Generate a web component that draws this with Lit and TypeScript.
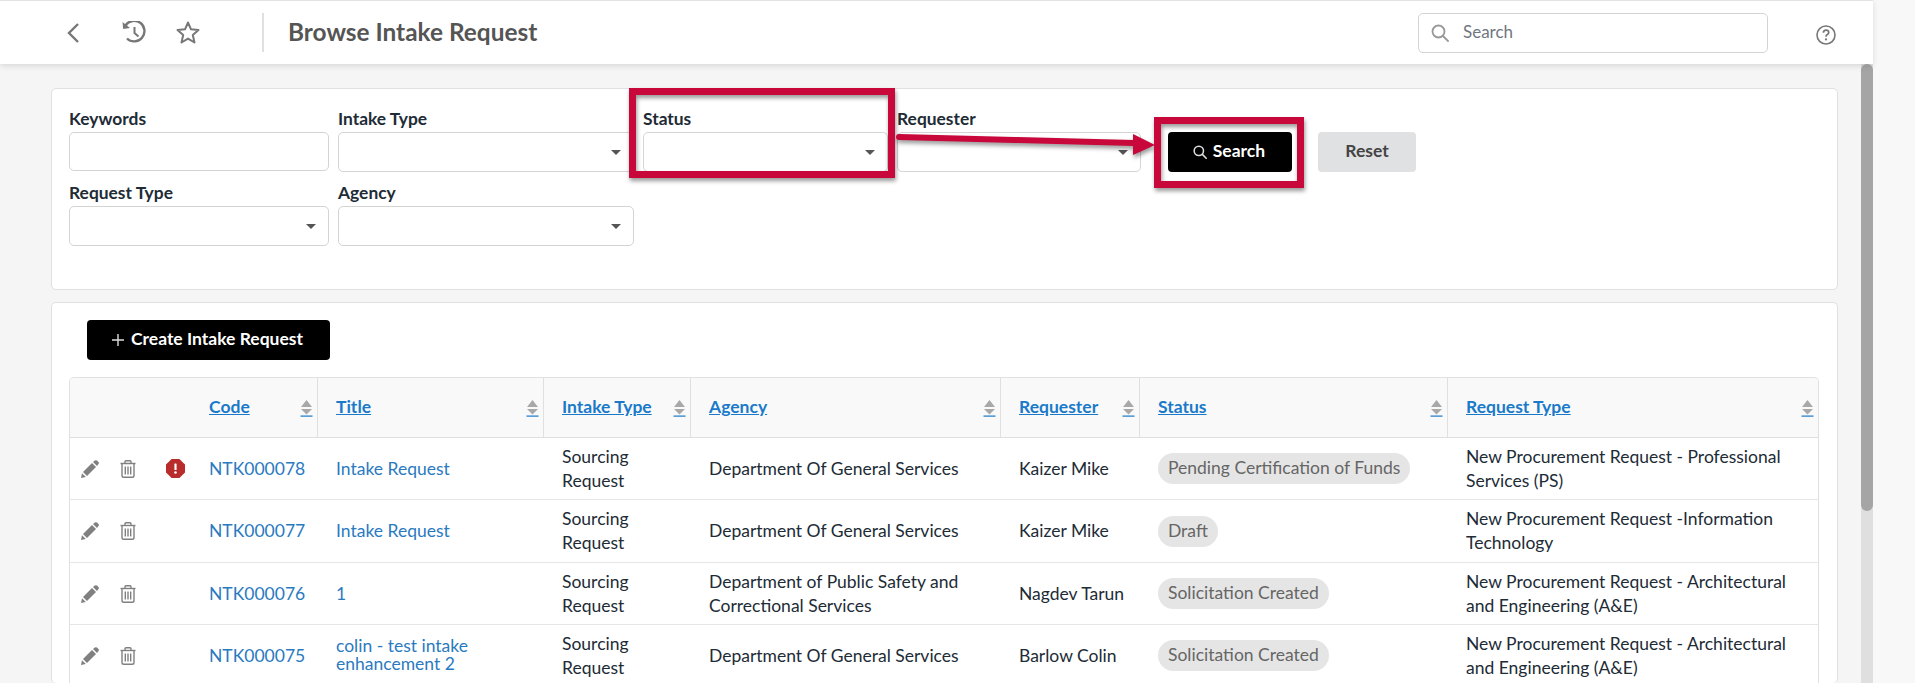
import { LitElement, html, css, svg } from "lit";
import { customElement } from "lit/decorators.js";

const rows = [
  { code: "NTK000078", title: "Intake Request", agency: "Department Of General Services", req: "Kaizer Mike", status: "Pending Certification of Funds", type: "New Procurement Request - Professional Services (PS)", err: true },
  { code: "NTK000077", title: "Intake Request", agency: "Department Of General Services", req: "Kaizer Mike", status: "Draft", type: "New Procurement Request -Information Technology", err: false },
  { code: "NTK000076", title: "1", agency: "Department of Public Safety and Correctional Services", req: "Nagdev Tarun", status: "Solicitation Created", type: "New Procurement Request - Architectural and Engineering (A&E)", err: false },
  { code: "NTK000075", title: "colin - test intake enhancement 2", agency: "Department Of General Services", req: "Barlow Colin", status: "Solicitation Created", type: "New Procurement Request - Architectural and Engineering (A&E)", err: false },
];

const heads = ["Code", "Title", "Intake Type", "Agency", "Requester", "Status", "Request Type"];

const sortIcon = html`<svg class="sort" width="13" height="17" viewBox="0 0 13 17">
  <path d="M6.5 0 L12 7 H1 Z" fill="#a8a8a8" />
  <path d="M1 9 H12 L6.5 14.5 Z" fill="#a8a8a8" />
  <rect x="0.5" y="15.5" width="12" height="1.2" fill="#1a7ac9" />
</svg>`;

const pencil = html`<svg width="18" height="18" viewBox="0 0 18 18" fill="#808080">
  <path d="M0 18 L1 13.2 L4.8 17 Z" />
  <path d="M2 12 L11 3 L15 7 L6 16 Z" />
  <path d="M12 2 L13.8 .5 Q15 -.2 16 .5 L17.5 2 Q18.3 3 17.5 4 L16 6 Z" />
</svg>`;

const trash = html`<svg width="16" height="18" viewBox="0 0 16 18" fill="none" stroke="#808080" stroke-width="1.4">
  <path d="M.5 3.5 H15.5" />
  <path d="M5 3.5 V1.8 Q5 .8 6 .8 H10 Q11 .8 11 1.8 V3.5" />
  <path d="M2 3.5 V15.5 Q2 17.3 3.8 17.3 H12.2 Q14 17.3 14 15.5 V3.5" />
  <path d="M5.3 6.5 V14.5 M8 6.5 V14.5 M10.7 6.5 V14.5" />
</svg>`;

const errorIcon = html`<svg width="19" height="19" viewBox="0 0 19 19">
  <path d="M5.6 0 H13.4 L19 5.6 V13.4 L13.4 19 H5.6 L0 13.4 V5.6 Z" fill="#b92c2c" />
  <rect x="8.4" y="4.4" width="2.2" height="6.6" rx=".6" fill="#fff" />
  <circle cx="9.5" cy="13.5" r="1.3" fill="#fff" />
</svg>`;

const searchGlass = (size: number, color: string, sw: number) => html`<svg width=${size} height=${size} viewBox="0 0 18 18" fill="none" stroke=${color} stroke-width=${sw}>
  <circle cx="7.5" cy="7.5" r="6" /><path d="M12 12 L17 17" stroke-linecap="round" />
</svg>`;

@customElement("app-root")
export class AppRoot extends LitElement {
  static styles = css`
    :host {
      display: block; position: relative; width: 1915px; height: 683px; overflow: hidden;
      background: #f8f8f8; font-family: Lato, "Noto Sans", sans-serif; font-size: 17.5px; color: #212b36;
    }
    .shell { width: 1873px; height: 683px; display: flex; flex-direction: column; background: #f5f5f5; }
    .topbar {
      flex: none; height: 64px; box-sizing: border-box; border-top: 1px solid #e2e2e2; background: #fff;
      display: flex; align-items: center; padding-left: 67px; box-shadow: 0 2px 6px rgba(0,0,0,.12); position: relative; z-index: 1;
    }
    .topbar svg { display: block; flex: none; }
    .hist { margin-left: 43px; }
    .star { margin-left: 30px; }
    .sep { width: 2px; height: 39px; background: #e0e0e0; margin-left: 62px; }
    h1 { margin: -2px 0 0 24px; font-size: 24.4px; font-weight: 700; color: #555; }
    .gsearch {
      margin-left: auto; width: 350px; height: 40px; box-sizing: border-box; border: 1px solid #d4d4d4; border-radius: 5px;
      display: flex; align-items: center; padding-left: 12px; gap: 14px;
    }
    .gsearch input { border: 0; outline: 0; flex: 1; min-width: 0; padding: 0 0 2px; font: 17px Lato, sans-serif; background: transparent; }
    .gsearch input::placeholder { color: #6f7780; opacity: 1; }
    .help { margin-left: 48px; margin-right: 37px; margin-top: 4px; }
    .body { flex: 1; min-height: 0; display: flex; }
    main { width: 1861px; box-sizing: border-box; padding: 24px 23px 0 51px; display: flex; flex-direction: column; gap: 12px; overflow: hidden; }
    .track { width: 12px; background: #dfdfdf; }
    .thumb { height: 447px; background: #a5a5a5; border-radius: 6px; }
    .card { background: #fff; border: 1px solid #e0e0e0; border-radius: 5px; box-sizing: border-box; flex: none; }
    .filters {
      height: 202px; padding: 19px 0 0 17px; display: grid; grid-template-columns: 260px 296px 245px 244px auto;
      column-gap: 9px; row-gap: 10px; align-content: start; justify-content: start;
    }
    label { display: block; font-weight: 700; font-size: 17.4px; line-height: 24px; color: #212b36; margin-top: -1px; padding-bottom: 1px; }
    .box { height: 40px; box-sizing: border-box; border: 1px solid #d4d4d4; border-radius: 5px; background: #fff; position: relative; }
    .text { height: 39px; }
    .select::after {
      content: ""; position: absolute; right: 12px; top: 17px; border-style: solid; border-width: 5.5px 5px 0; border-color: #555 transparent transparent;
    }
    .btns { align-self: end; display: flex; gap: 26px; margin-left: 18px; }
    .btn {
      height: 40px; box-sizing: border-box; border-radius: 4px; display: flex; align-items: center; justify-content: center;
      font-weight: 700; font-size: 17.5px;
    }
    .btn span { margin-top: -3px; }
    .primary { background: #000; color: #fff; }
    .b-search { width: 124px; gap: 6px; padding-right: 2px; }
    .b-reset { width: 98px; background: #e0e1e3; color: #444; }
    .list { flex: 1; min-height: 0; padding: 17px 19px 0 17px; overflow: hidden; border-bottom: 0; }
    .b-create { width: 243px; margin-left: 18px; gap: 7px; padding-right: 2px; }
    .tablewrap { margin-top: 17px; border: 1px solid #e0e0e0; border-bottom: 0; border-radius: 5px 5px 0 0; overflow: hidden; width: 1750px; box-sizing: border-box; }
    table { border-collapse: separate; border-spacing: 0; table-layout: fixed; width: 1748px; }
    .c0 { width: 121px; } .c1 { width: 127px; } .c2 { width: 226px; } .c3 { width: 147px; }
    .c4 { width: 310px; } .c5 { width: 139px; } .c6 { width: 308px; } .c7 { width: 370px; }
    th { height: 59px; padding: 0; background: #f9f9f9; border-bottom: 1px solid #e0e0e0; border-right: 1px solid #e0e0e0; text-align: left; font-weight: 700; }
    th:first-child, th:last-child { border-right: 0; }
    .th { display: flex; align-items: center; justify-content: space-between; padding: 0 4px 0 18px; }
    .th a { color: #1a7ac9; text-decoration: underline; line-height: 20px; margin-top: -2px; }
    .sort { flex: none; display: block; margin-top: 2px; }
    td { padding: 6.5px 8px 6.5px 18px; line-height: 24px; border-bottom: 1px solid #e6e6e6; vertical-align: middle; color: #212b36; }
    tr:nth-child(2) td { padding-top: 7px; padding-bottom: 7px; }
    td.act { padding: 0 0 0 11px; }
    .acts { display: flex; align-items: center; gap: 21px; }
    .acts svg { display: block; flex: none; }
    .acts .e { margin-left: 9px; }
    td.link { color: #2a7abf; padding-right: 18px; }
    .t { line-height: 18px; display: block; }
    .wrapped { margin-top: -2px; }
    .pill { display: inline-block; background: #e5e5e5; color: #666; border-radius: 16px; padding: 0 10px; line-height: 30px; height: 31px; white-space: nowrap; vertical-align: middle; }
    .annot { position: absolute; left: 0; top: 0; pointer-events: none; filter: drop-shadow(1px 3px 2px rgba(0,0,0,.4)); }
  `;

  render() {
    return html`
      <div class="shell">
        <header class="topbar">
          <svg width="12" height="20" viewBox="0 0 12 20" fill="none" stroke="#777" stroke-width="2.4"><path d="M11 1 L2 10 L11 19" /></svg>
          <svg class="hist" width="24" height="23" viewBox="0 0 24 23" fill="none" stroke="#777" stroke-width="2.4">
            <path d="M3.5 4.5 A10.3 10.3 0 1 1 5 17.5" />
            <path d="M0.5 1 L1.2 8 L8 7 Z" fill="#777" stroke="none" />
            <path d="M12.5 6 V12 L16.5 15.5" stroke-width="2" />
          </svg>
          <svg class="star" width="24" height="23" viewBox="0 0 24 23" fill="none" stroke="#777" stroke-width="2" stroke-linejoin="round">
            <path d="M12 1.5 L15 8.3 L22.5 9 L16.8 14 L18.5 21.5 L12 17.6 L5.5 21.5 L7.2 14 L1.5 9 L9 8.3 Z" />
          </svg>
          <div class="sep"></div>
          <h1>Browse Intake Request</h1>
          <div class="gsearch">${searchGlass(18, "#999", 1.8)}<input placeholder="Search" /></div>
          <svg class="help" width="20" height="20" viewBox="0 0 20 20" fill="none" stroke="#777" stroke-width="1.6">
            <circle cx="10" cy="10" r="9" />
            <path d="M7.4 7.8 Q7.4 5.2 10 5.2 Q12.7 5.2 12.7 7.5 Q12.7 9 11 9.8 Q10 10.3 10 11.8" stroke-width="1.7" />
            <circle cx="10" cy="14.4" r="1.1" fill="#777" stroke="none" />
          </svg>
        </header>
        <div class="body">
          <main>
            <section class="card filters">
              <div><label>Keywords</label><div class="box text"></div></div>
              <div><label>Intake Type</label><div class="box select"></div></div>
              <div><label>Status</label><div class="box select"></div></div>
              <div><label>Requester</label><div class="box select"></div></div>
              <div class="btns">
                <div class="btn primary b-search">${searchGlass(14, "#ddd", 2)}<span>Search</span></div>
                <div class="btn b-reset"><span>Reset</span></div>
              </div>
              <div><label>Request Type</label><div class="box select"></div></div>
              <div><label>Agency</label><div class="box select"></div></div>
            </section>
            <section class="card list">
              <div class="btn primary b-create">
                <svg width="12" height="12" viewBox="0 0 12 12" stroke="#ddd" stroke-width="1.4"><path d="M6 0 V12 M0 6 H12" /></svg>
                <span>Create Intake Request</span>
              </div>
              <div class="tablewrap">
                <table>
                  <colgroup>
                    ${[0, 1, 2, 3, 4, 5, 6, 7].map((i) => html`<col class="c${i}" />`)}
                  </colgroup>
                  <thead>
                    <tr>
                      <th></th>
                      ${heads.map((h) => html`<th><div class="th"><a>${h}</a>${sortIcon}</div></th>`)}
                    </tr>
                  </thead>
                  <tbody>
                    ${rows.map((r) => html`<tr>
                      <td class="act"><div class="acts">${pencil}${trash}${r.err ? html`<span class="e">${errorIcon}</span>` : ""}</div></td>
                      <td class="link">${r.code}</td>
                      <td class="link"><span class=${r.title.length > 20 ? "t wrapped" : "t"}>${r.title}</span></td>
                      <td>Sourcing Request</td>
                      <td>${r.agency}</td>
                      <td>${r.req}</td>
                      <td><span class="pill">${r.status}</span></td>
                      <td>${r.type}</td>
                    </tr>`)}
                  </tbody>
                </table>
              </div>
            </section>
          </main>
          <div class="track"><div class="thumb"></div></div>
        </div>
      </div>
      <svg class="annot" width="1915" height="683" viewBox="0 0 1915 683" fill="none">
        ${svg`
          <rect x="632.5" y="91.5" width="259" height="83" stroke="#c8073a" stroke-width="7" />
          <rect x="1157.5" y="120.5" width="143" height="64" stroke="#c8073a" stroke-width="7" />
          <path d="M899 137 L1134 143" stroke="#c8073a" stroke-width="6" stroke-linecap="round" />
          <path d="M1133 134 L1155 145 L1133 155 Z" fill="#c8073a" />
        `}
      </svg>
    `;
  }
}
